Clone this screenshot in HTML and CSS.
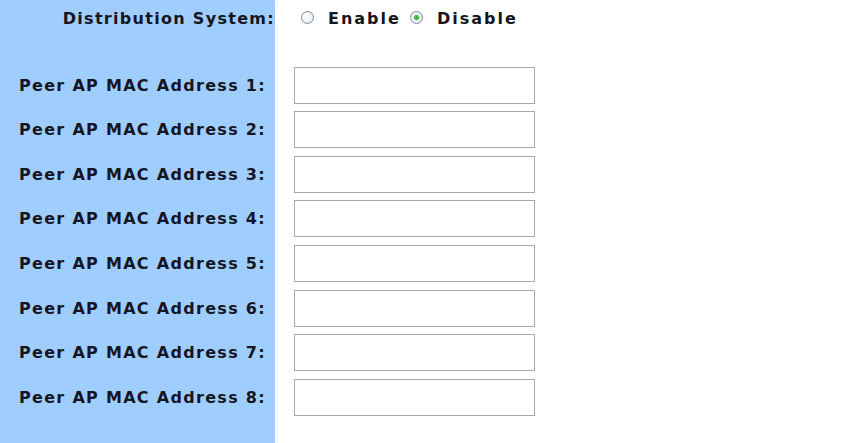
FILE: index.html
```html
<!DOCTYPE html>
<html>
<head>
<meta charset="utf-8">
<link rel="stylesheet" href="styles.css">
</head>
<body>
<div class="page">
  <div class="row ds-row">
    <div class="label label-right">Distribution System:</div>
    <div class="ctrl radios">
      <label class="opt"><input type="radio" name="ds" class="radio"><span>Enable</span></label>
      <label class="opt"><input type="radio" name="ds" class="radio" checked><span>Disable</span></label>
    </div>
  </div>
  <div class="row mac-row"><div class="label">Peer AP MAC Address 1:</div><div class="ctrl"><input type="text" class="mac-input"></div></div>
  <div class="row mac-row"><div class="label">Peer AP MAC Address 2:</div><div class="ctrl"><input type="text" class="mac-input"></div></div>
  <div class="row mac-row"><div class="label">Peer AP MAC Address 3:</div><div class="ctrl"><input type="text" class="mac-input"></div></div>
  <div class="row mac-row"><div class="label">Peer AP MAC Address 4:</div><div class="ctrl"><input type="text" class="mac-input"></div></div>
  <div class="row mac-row"><div class="label">Peer AP MAC Address 5:</div><div class="ctrl"><input type="text" class="mac-input"></div></div>
  <div class="row mac-row"><div class="label">Peer AP MAC Address 6:</div><div class="ctrl"><input type="text" class="mac-input"></div></div>
  <div class="row mac-row"><div class="label">Peer AP MAC Address 7:</div><div class="ctrl"><input type="text" class="mac-input"></div></div>
  <div class="row mac-row"><div class="label">Peer AP MAC Address 8:</div><div class="ctrl"><input type="text" class="mac-input"></div></div>
</div>
</body>
</html>
```

FILE: styles.css
```css
html, body {
  margin: 0;
  padding: 0;
  background: #fff;
}
.page {
  height: 443px;
  box-sizing: border-box;
  background: linear-gradient(to right, #9fcefe 0, #9fcefe 275px, #ffffff 275px);
  font-family: "DejaVu Sans", Verdana, sans-serif;
  font-weight: bold;
  font-size: 16px;
  letter-spacing: 1.3px;
  color: #15151f;
  display: flex;
  flex-direction: column;
}
.row {
  display: flex;
  align-items: center;
}
.ds-row {
  height: 36px;
  margin-bottom: 26.7px;
}
.mac-row {
  height: 44.64px;
}
.label {
  width: 275px;
  flex: none;
  box-sizing: border-box;
  padding-left: 19px;
  white-space: nowrap;
}
.label-right {
  text-align: right;
  padding-left: 0;
  padding-right: 0;
}
.ctrl {
  padding-left: 19px;
  display: flex;
  align-items: center;
}
.radios {
  padding-left: 26px;
  gap: 9px;
}
.opt {
  display: flex;
  align-items: center;
  gap: 14px;
  letter-spacing: 2px;
}
.radio {
  appearance: none;
  -webkit-appearance: none;
  margin: 0;
  width: 13px;
  height: 13px;
  border-radius: 50%;
  border: 1px solid #7f8d9c;
  background: radial-gradient(circle at 40% 40%, #ffffff 0, #eceff2 65%, #d3d9e0 100%);
  box-sizing: border-box;
  position: relative;
  top: -1px;
}
.radio:checked {
  background: radial-gradient(circle, #3aa93a 0, #4dbd4d 2px, #b8e2b8 2.8px, #f4f6f8 3.6px, #dfe4ea 100%);
}
.mac-input {
  width: 241px;
  height: 37px;
  box-sizing: border-box;
  border: 1px solid #a3abb3;
  margin: 0;
  padding: 2px 4px;
  background: #fff;
  outline: none;
}
```
